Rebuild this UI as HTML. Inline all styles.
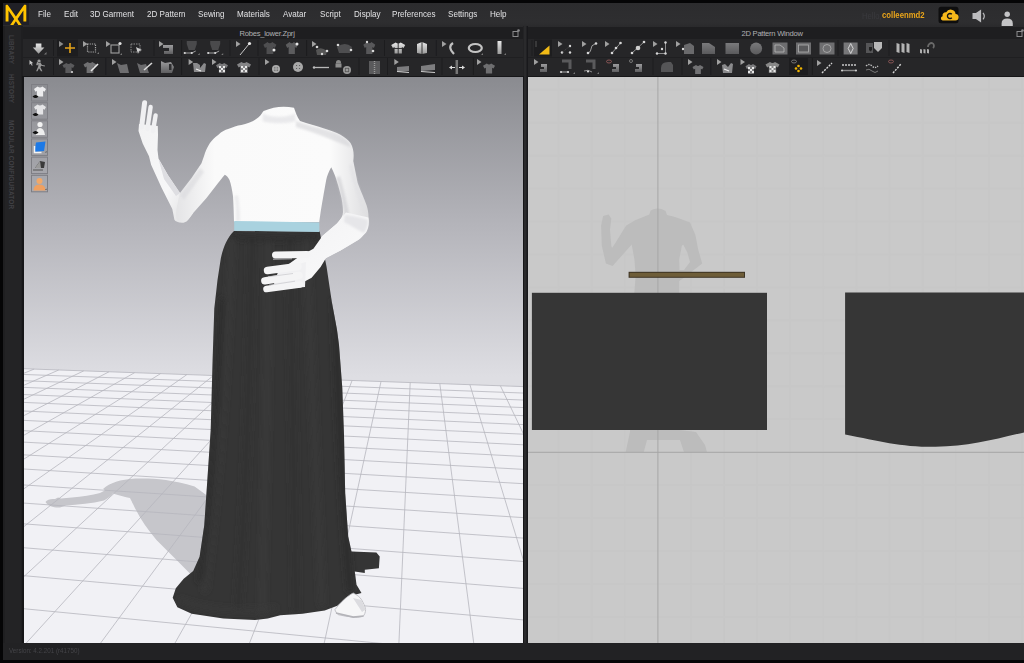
<!DOCTYPE html>
<html><head><meta charset="utf-8">
<style>
*{margin:0;padding:0;box-sizing:border-box}
html,body{width:1024px;height:663px;overflow:hidden;background:#050506;font-family:"Liberation Sans",sans-serif}
.a{position:absolute}
#menubar{left:3px;top:3px;width:1021px;height:24px;background:linear-gradient(#2c2c2e,#2e2e30 80%,#2a2a2c)}
.mi{position:absolute;top:4.8px;font-size:9.5px;color:#e2e2e4;white-space:nowrap;transform:scaleX(0.85);transform-origin:0 0}
#sidebar{left:3px;top:26px;width:20px;height:617px;background:#1f1f21}
#sidebar .strip{position:absolute;left:2px;top:0;width:16px;height:617px;background:#232325}
.vt{position:absolute;font-size:7.4px;color:#404044;white-space:nowrap;transform-origin:0 0;transform:rotate(90deg) scaleX(0.87);letter-spacing:0.15px;font-weight:bold}
#title1{left:23px;top:27px;width:500px;height:12px;background:#1e1e20}
#title2{left:528px;top:27px;width:496px;height:12px;background:#1e1e20}
.tt{position:absolute;top:1.5px;font-size:7.6px;color:#b0b0b2;white-space:nowrap;letter-spacing:-0.25px}
#tb1{left:23px;top:39px;width:500px;height:37px;background:linear-gradient(#262628 0,#262628 48%,#1f1f21 48%,#1f1f21 51%,#262628 51%)}
#tb2{left:528px;top:39px;width:496px;height:37px;background:linear-gradient(#262628 0,#262628 48%,#1f1f21 48%,#1f1f21 51%,#262628 51%)}
#divider{left:523px;top:26px;width:5px;height:617px;background:linear-gradient(90deg,#1c1c1e 0,#2a2a2c 20%,#2a2a2c 60%,#18181b 80%)}
#vp3d{left:24px;top:77px;width:499px;height:566px;overflow:hidden;background:linear-gradient(#8a8b90 0%,#b4b4ba 26%,#dedee3 53%,#e0e0e4 100%)}
#vp2d{left:528px;top:77px;width:496px;height:566px;overflow:hidden;background:#c9c9c9}
#status{left:3px;top:643px;width:1021px;height:17px;background:#222224}
</style></head><body>
<div id="menubar" class="a">
  <div class="a" style="left:0;top:0;width:26px;height:21.5px;background:#202026"></div><svg class="a" style="left:-3px;top:-3px" width="40" height="30" viewBox="0 0 40 30"><path d="M5.6 21.6 V5.6 Q5.6 4.8 6.6 4.8 H7.6 L15.9 16.6 L24.2 4.8 H25.3 Q26.3 4.8 26.3 5.6 V21.6 H23.4 V10.5 L17.6 19 L21.6 25 H18.4 L15.9 21.3 L13.4 25 H10.2 L14.2 19 L8.5 10.5 V21.6 Z" fill="#ffc400"/></svg>
  <span class="mi" style="left:35.3px">File</span>
  <span class="mi" style="left:61.3px">Edit</span>
  <span class="mi" style="left:87.0px">3D Garment</span>
  <span class="mi" style="left:143.5px">2D Pattern</span>
  <span class="mi" style="left:194.5px">Sewing</span>
  <span class="mi" style="left:233.8px">Materials</span>
  <span class="mi" style="left:280.1px">Avatar</span>
  <span class="mi" style="left:316.7px">Script</span>
  <span class="mi" style="left:350.5px">Display</span>
  <span class="mi" style="left:389.1px">Preferences</span>
  <span class="mi" style="left:445.1px">Settings</span>
  <span class="mi" style="left:487.2px">Help</span>
<span class="a" style="left:859px;top:8px;font-size:8.5px;color:#3a3a3e;transform:scaleX(0.9);transform-origin:0 0">Hello,</span>
<span class="a" style="left:879px;top:7px;font-size:9px;font-weight:bold;color:#eaa51a;transform:scaleX(0.86);transform-origin:0 0;white-space:nowrap">colleenmd2</span>
<svg class="a" style="left:0;top:0" width="1024" height="26" viewBox="0 0 1024 26">
<rect x="935.5" y="3.8" width="20" height="16.5" rx="2.5" fill="#0e0e0f"/>
<path d="M939.5 17.5 h12.5 a3.3 3.3 0 0 0 0.6 -6.6 a5 5 0 0 0 -9.4 -1.6 a3.2 3.2 0 0 0 -3.6 3.9 a2.2 2.2 0 0 0 0 4.3z" fill="#f7b81a"/><path d="M948.8 11.3 a2.5 2.5 0 1 0 0 3.4" fill="none" stroke="#141414" stroke-width="1.4"/><path d="M969.5 10 h3.4 l5.2 -3.6 v13.2 l-5.2 -3.6 h-3.4z" fill="#bcbcbe"/>
<path d="M980 9.8 q2.6 3.2 0 6.6" fill="none" stroke="#bcbcbe" stroke-width="1.2"/>
<circle cx="1004.2" cy="11.2" r="2.7" fill="#c4c4c6"/>
<path d="M998.6 23 v-2.5 q0 -5 5.6 -5 q5.6 0 5.6 5 v2.5z" fill="#c4c4c6"/>
</svg>

</div>
<div id="sidebar" class="a"><div class="strip"></div>
  <span class="vt" style="left:13px;top:8.5px">LIBRARY</span>
  <span class="vt" style="left:13px;top:47.5px">HISTORY</span>
  <span class="vt" style="left:13px;top:93.5px">MODULAR CONFIGURATOR</span>
</div>
<div id="title1" class="a"><span class="tt" style="left:216.5px">Robes_lower.Zprj</span><svg class="a" style="left:488px;top:1px" width="10" height="10" viewBox="0 0 10 10"><rect x="2" y="3.5" width="5" height="5" fill="none" stroke="#8a8a8c" stroke-width="1"/><circle cx="7.5" cy="2.5" r="1.3" fill="#8a8a8c"/></svg></div>
<div id="title2" class="a"><span class="tt" style="left:213.5px">2D Pattern Window</span><svg class="a" style="left:487px;top:1px" width="10" height="10" viewBox="0 0 10 10"><rect x="2" y="3.5" width="5" height="5" fill="none" stroke="#8a8a8c" stroke-width="1"/><circle cx="7.5" cy="2.5" r="1.3" fill="#8a8a8c"/></svg></div>
<div id="divider" class="a"></div>
<div id="tb1" class="a"></div>
<div id="tb2" class="a"></div>
<!--TB--><svg class="a" style="left:0;top:0" width="1024" height="80" viewBox="0 0 1024 80"><defs><linearGradient id="gwhite" x1="0" y1="0" x2="0" y2="1"><stop offset="0" stop-color="#e8e8e8"/><stop offset="1" stop-color="#9a9a9a"/></linearGradient>
<linearGradient id="gshirt" x1="0" y1="0" x2="0" y2="1"><stop offset="0" stop-color="#9c9c9e"/><stop offset="1" stop-color="#5e5e60"/></linearGradient>
<linearGradient id="gflat" x1="0" y1="0" x2="0" y2="1"><stop offset="0" stop-color="#7a7a7c"/><stop offset="1" stop-color="#5a5a5c"/></linearGradient></defs><path d="M35.8 43.5h5.6v4h3l-5.8 6.3l-5.8 -6.3h3z" fill="url(#gwhite)"/><path d="M44 54.5l2.5 -2.5v2.5z" fill="#777"/><path d="M53.5 40V56" stroke="#1c1c1e" stroke-width="1"/><rect x="57" y="39.5" width="21" height="17" fill="#1d1d1f"/><path d="M59 41v6l4.5 -3z" fill="#8a8a8a"/><path d="M70 43v10M65 48h10" stroke="#e3a21a" stroke-width="1.6"/><path d="M83 41v6l4.5 -3z" fill="#a0a0a0"/><rect x="87.5" y="44" width="8" height="8" fill="none" stroke="#a8a8a8" stroke-width="1.2" stroke-dasharray="1.2 1"/><path d="M97 54l2 -2v2z" fill="#777"/><path d="M106 41v6l4.5 -3z" fill="#a0a0a0"/><rect x="111" y="45" width="8" height="8" fill="none" stroke="#a0a0a0" stroke-width="1.1"/><circle cx="120" cy="43.5" r="1.6" fill="#e0e0e0"/><path d="M120 55l2 -2v2z" fill="#777"/><rect x="131" y="44" width="9" height="8" fill="none" stroke="#8a8a8a" stroke-width="1" stroke-dasharray="1.5 1"/><path d="M136 47l6 3l-3 1l-1 3z" fill="#d0d0d0"/><path d="M154 40V56" stroke="#1c1c1e" stroke-width="1"/><path d="M159 41v6l4.5 -3z" fill="#a0a0a0"/><path d="M163 45h10v9h-9v-3h5v-3h-6z" fill="url(#gshirt)"/><path d="M181.6 40V56" stroke="#1c1c1e" stroke-width="1"/><path d="M186.75 41h10v3l-2 6h-6l-2 -6z" fill="#4a4a4c"/><path d="M184.75 53h7l4 -2" stroke="#bbb" stroke-width="0.8" fill="none"/><circle cx="184.75" cy="53" r="1.1" fill="#d8d8d8"/><circle cx="191.75" cy="53" r="1.1" fill="#d8d8d8"/><path d="M197.75 55l2 -2v2z" fill="#777"/><path d="M210.2 41h10v3l-2 6h-6l-2 -6z" fill="#4a4a4c"/><path d="M208.2 53h7l4 -2" stroke="#bbb" stroke-width="0.8" fill="none"/><circle cx="208.2" cy="53" r="1.1" fill="#d8d8d8"/><circle cx="215.2" cy="53" r="1.1" fill="#d8d8d8"/><path d="M221.2 55l2 -2v2z" fill="#777"/><path d="M230 40V56" stroke="#1c1c1e" stroke-width="1"/><path d="M236 41v6l4.5 -3z" fill="#a0a0a0"/><path d="M240 55l9 -11" stroke="#c8c8c8" stroke-width="1"/><circle cx="249.5" cy="43.5" r="1.6" fill="#e8e8e8"/><path d="M258 40V56" stroke="#1c1c1e" stroke-width="1"/><path d="M267.56 42.0 L263.4 44.64 L264.96 48.0 L266.52 47.04 L266.52 54.0 L273.28 54.0 L273.28 47.04 L274.84 48.0 L276.4 44.64 L272.23999999999995 42.0 Q269.9 44.4 267.56 42.0Z" fill="#4e4e50"/><circle cx="274" cy="50" r="1.5" fill="#e8e8e8"/><path d="M289.59 42.0 L285.75 44.64 L287.19 48.0 L288.63 47.04 L288.63 54.0 L294.87 54.0 L294.87 47.04 L296.31 48.0 L297.75 44.64 L293.91 42.0 Q291.75 44.4 289.59 42.0Z" fill="#5c5c5e"/><circle cx="297" cy="44" r="1.5" fill="#e8e8e8"/><path d="M306.6 40V56" stroke="#1c1c1e" stroke-width="1"/><path d="M312 41v6l4.5 -3z" fill="#a0a0a0"/><path d="M316 50q5 -4 11 1l-1 4h-9z" fill="#555"/><circle cx="317" cy="47" r="1.3" fill="#d8d8d8"/><circle cx="327" cy="51" r="1.3" fill="#d8d8d8"/><circle cx="322" cy="54" r="1.2" fill="#d8d8d8"/><path d="M337 47q8 -6 15 0l-2 6h-11z" fill="#4e4e50"/><circle cx="338" cy="45" r="1.3" fill="#d8d8d8"/><circle cx="351" cy="50" r="1.3" fill="#d8d8d8"/><path d="M367.14 42.0 L363.3 44.64 L364.74 48.0 L366.18 47.04 L366.18 54.0 L372.42 54.0 L372.42 47.04 L373.86 48.0 L375.3 44.64 L371.46000000000004 42.0 Q369.3 44.4 367.14 42.0Z" fill="#58585a"/><circle cx="373" cy="51" r="1.3" fill="#d8d8d8"/><circle cx="367" cy="42" r="1.2" fill="#d8d8d8"/><path d="M384.5 40V56" stroke="#1c1c1e" stroke-width="1"/><path d="M395.68 42.5 L391.2 44.92 L392.88 48.0 L394.56 47.12 L394.56 53.5 L401.84 53.5 L401.84 47.12 L403.52 48.0 L405.2 44.92 L400.71999999999997 42.5 Q398.2 44.7 395.68 42.5Z" fill="url(#gwhite)"/><path d="M398.2 43v11M392 48.5h12" stroke="#2a2a2c" stroke-width="0.9"/><path d="M417 44l5 -2l5 2v9l-5 1l-5 -1z" fill="url(#gwhite)"/><path d="M422 42v12" stroke="#333" stroke-width="1"/><path d="M436.3 40V56" stroke="#1c1c1e" stroke-width="1"/><path d="M442 41v6l4.5 -3z" fill="#a0a0a0"/><path d="M453 43q-6 4 1 11" stroke="#c0c0c0" stroke-width="2.2" fill="none"/><ellipse cx="475.3" cy="48" rx="6.5" ry="4" fill="none" stroke="#c4c4c4" stroke-width="2.2"/><path d="M481 55l2 -2v2z" fill="#777"/><rect x="497.5" y="41" width="4" height="13" fill="url(#gwhite)"/><path d="M504 55l2 -2v2z" fill="#777"/><path d="M29.5 60l0 4.800000000000001l1.2800000000000002 -1.1199999999999999l1.1199999999999999 2.08l0.7200000000000001 -0.4l-1.04 -2.0l1.7600000000000002 -0.2z" fill="#c8c8c8"/><path d="M39 59.5a1.6 1.6 0 1 0 0.1 0zM37 62l3 0l2 3l3 0.5l-0.3 1l-3.5 -0.8l-0.8 1.5l2 4h-1.4l-2 -3l-1.5 3h-1.4l2 -4.5l0.4 -2.5l-1.4 1.2l-0.9 -0.6z" fill="#9a9a9a"/><path d="M53.5 58V75" stroke="#1c1c1e" stroke-width="1"/><path d="M59 59v6l4.5 -3z" fill="#a0a0a0"/><path d="M66.34 63.0 L62.5 65.2 L63.94 68.0 L65.38 67.2 L65.38 73.0 L71.62 73.0 L71.62 67.2 L73.06 68.0 L74.5 65.2 L70.66 63.0 Q68.5 65.0 66.34 63.0Z" fill="#5a5a5c"/><circle cx="72" cy="72" r="1.1" fill="#d8d8d8"/><path d="M87.66 62.0 L83.5 64.42 L85.06 67.5 L86.62 66.62 L86.62 73.0 L93.38 73.0 L93.38 66.62 L94.94 67.5 L96.5 64.42 L92.34 62.0 Q90.0 64.2 87.66 62.0Z" fill="#707072"/><path d="M91 71l7 -7" stroke="#e8e8e8" stroke-width="1.6"/><path d="M105.8 58V75" stroke="#1c1c1e" stroke-width="1"/><path d="M112 59v6l4.5 -3z" fill="#a0a0a0"/><path d="M117 63l4 2l6 -1l2 9h-9z" fill="#6e6e70"/><path d="M137 63l4 2l5 -1l3 9h-9z" fill="#6a6a6c"/><path d="M144 70l8 -7" stroke="#d8d8d8" stroke-width="1.6"/><path d="M161 61l4 2l6 -1l3 5l-2 6h-11z" fill="url(#gshirt)"/><rect x="169" y="64" width="2.5" height="6" fill="#2e2e30"/><path d="M181.6 58V75" stroke="#1c1c1e" stroke-width="1"/><path d="M188.6 59v6l4.5 -3z" fill="#a0a0a0"/><path d="M193 63h4l3 2v3l4 -5l2 1l-1 8h-11z" fill="#8a8a8c"/><path d="M196 69l5 2" stroke="#eee" stroke-width="1.2"/><path d="M212 59v6l4.5 -3z" fill="#a0a0a0"/><path d="M219.84 63.0 L216.0 65.2 L217.44 68.0 L218.88 67.2 L218.88 73.0 L225.12 73.0 L225.12 67.2 L226.56 68.0 L228.0 65.2 L224.16 63.0 Q222.0 65.0 219.84 63.0Z" fill="#7a7a7c"/><rect x="219" y="66" width="2" height="2" fill="#e8e8e8"/><rect x="219" y="70" width="2" height="2" fill="#e8e8e8"/><rect x="221" y="68" width="2" height="2" fill="#e8e8e8"/><rect x="223" y="66" width="2" height="2" fill="#e8e8e8"/><rect x="223" y="70" width="2" height="2" fill="#e8e8e8"/><path d="M241.48 62.0 L237.0 64.42 L238.68 67.5 L240.36 66.62 L240.36 73.0 L247.64 73.0 L247.64 66.62 L249.32 67.5 L251.0 64.42 L246.52 62.0 Q244.0 64.2 241.48 62.0Z" fill="#858587"/><rect x="241" y="66" width="2" height="2" fill="#e8e8e8"/><rect x="241" y="70" width="2" height="2" fill="#e8e8e8"/><rect x="243" y="68" width="2" height="2" fill="#e8e8e8"/><rect x="245" y="66" width="2" height="2" fill="#e8e8e8"/><rect x="245" y="70" width="2" height="2" fill="#e8e8e8"/><path d="M259 58V75" stroke="#1c1c1e" stroke-width="1"/><path d="M265 59v6l4.5 -3z" fill="#a0a0a0"/><circle cx="276" cy="69" r="4" fill="#aaaaaa"/><path d="M274.8 67.8h.1M277.2 67.8h.1M274.8 70.2h.1M277.2 70.2h.1" stroke="#555" stroke-width="1.2" stroke-linecap="round"/><circle cx="298" cy="67" r="5" fill="#a8a8a8"/><path d="M296.5 65.5h.1M299.5 65.5h.1M296.5 68.5h.1M299.5 68.5h.1" stroke="#555" stroke-width="1.2" stroke-linecap="round"/><path d="M314 67.5h15" stroke="#b8b8b8" stroke-width="1.3"/><circle cx="314" cy="67.5" r="1.2" fill="#bbb"/><path d="M336 62.5a2.5 2.5 0 0 1 5 0v1h-5z" fill="#8a8a8a"/><rect x="335.5" y="63.5" width="6" height="4" fill="#8e8e8e"/><circle cx="347" cy="70" r="4" fill="#9a9a9a"/><rect x="345.3" y="68.3" width="3.4" height="3.4" fill="none" stroke="#555" stroke-width="0.8"/><path d="M359 58V75" stroke="#1c1c1e" stroke-width="1"/><rect x="369" y="61" width="11" height="13" fill="#5a5a5c"/><path d="M374.5 61v13" stroke="#9a9a9a" stroke-width="1.4" stroke-dasharray="1 1"/><path d="M387.5 58V75" stroke="#1c1c1e" stroke-width="1"/><path d="M394.3 59v6l4.5 -3z" fill="#a0a0a0"/><path d="M397 67l12 -1v5l-12 1z" fill="#7c7c7e"/><path d="M397 71.5l12 1" stroke="#d0d0d0" stroke-width="1.2"/><path d="M421 66l14 -2v6l-14 1z" fill="#7e7e80"/><path d="M421 71.5l14 1" stroke="#d0d0d0" stroke-width="1.2"/><path d="M442 58V75" stroke="#1c1c1e" stroke-width="1"/><path d="M456.8 60v14" stroke="#777" stroke-width="2.5"/><path d="M449 67.5l3 -2v4zM465 67.5l-3 -2v4z" fill="#ddd"/><path d="M452 67.5h3M459 67.5h3" stroke="#ddd" stroke-width="1"/><path d="M473.4 58V75" stroke="#1c1c1e" stroke-width="1"/><path d="M477 59v6l4.5 -3z" fill="#a0a0a0"/><path d="M486.84 63.5 L483.0 65.7 L484.44 68.5 L485.88 67.7 L485.88 73.5 L492.12 73.5 L492.12 67.7 L493.56 68.5 L495.0 65.7 L491.16 63.5 Q489.0 65.5 486.84 63.5Z" fill="#6e6e70"/><path d="M532 40V56" stroke="#1c1c1e" stroke-width="1"/><rect x="534" y="39.5" width="18" height="17" fill="#1d1d1f"/><path d="M539 54.5l10.5 -9v9z" fill="#f2bb16"/><path d="M536 41v6" stroke="#555" stroke-width="1"/><path d="M558 41v6l4.5 -3z" fill="#a0a0a0"/><circle cx="562" cy="52.5" r="1.2" fill="#d8d8d8"/><circle cx="570" cy="52.5" r="1.2" fill="#d8d8d8"/><circle cx="570" cy="46" r="1.2" fill="#d8d8d8"/><path d="M562 52.5l8 -6.5" stroke="#666" stroke-width="0.6" stroke-dasharray="1 1"/><path d="M582 41v6l4.5 -3z" fill="#a0a0a0"/><path d="M588 53q3 -1 3 -4q0 -4 4 -5" stroke="#bbb" stroke-width="0.8" fill="none"/><circle cx="588" cy="53" r="1.3" fill="#d8d8d8"/><circle cx="596" cy="43.5" r="1.3" fill="#d8d8d8"/><path d="M605 41v6l4.5 -3z" fill="#a0a0a0"/><path d="M612 53l8.5 -10" stroke="#aaa" stroke-width="0.8"/><circle cx="612" cy="53" r="1.3" fill="#d8d8d8"/><circle cx="616" cy="48" r="1.3" fill="#d8d8d8"/><circle cx="620.5" cy="43" r="1.3" fill="#d8d8d8"/><path d="M632 53l12 -11" stroke="#aaa" stroke-width="0.8"/><circle cx="632" cy="53" r="1.3" fill="#d8d8d8"/><circle cx="644" cy="42" r="1.3" fill="#d8d8d8"/><circle cx="638" cy="48" r="2.3" fill="#cfcfcf"/><path d="M653 41v6l4.5 -3z" fill="#a0a0a0"/><path d="M657 53.5h8.5v-11" stroke="#aaa" stroke-width="0.8" fill="none"/><circle cx="657" cy="53.5" r="1.2" fill="#d8d8d8"/><circle cx="665.5" cy="53.5" r="1.2" fill="#d8d8d8"/><circle cx="662" cy="49" r="1.2" fill="#d8d8d8"/><circle cx="665.5" cy="42.5" r="1.2" fill="#d8d8d8"/><path d="M676 41v6l4.5 -3z" fill="#a0a0a0"/><path d="M684 45l6 -2l4 3v8h-10z" fill="#6a6a6c"/><circle cx="683" cy="49" r="1.2" fill="#d8d8d8"/><path d="M702 43h7l6 4v7h-13z" fill="url(#gflat)"/><rect x="725.5" y="43" width="13.5" height="11" fill="url(#gflat)"/><circle cx="756.1" cy="48.5" r="6" fill="url(#gflat)"/><rect x="772.5" y="42.5" width="15" height="12" fill="#6e6e70"/><path d="M775 45h5l4 3v4h-9z" fill="none" stroke="#b8b8b8" stroke-width="0.8"/><rect x="796" y="42.5" width="15" height="12" fill="#6e6e70"/><rect x="798.5" y="45" width="10" height="7" fill="#59595b" stroke="#b0b0b0" stroke-width="0.8"/><rect x="819.5" y="42.5" width="15" height="12" fill="#6e6e70"/><circle cx="827" cy="48.5" r="4" fill="none" stroke="#b0b0b0" stroke-width="0.8"/><path d="M838 40V56" stroke="#1c1c1e" stroke-width="1"/><rect x="843.6" y="42.5" width="14" height="12" fill="#777779"/><path d="M850.7 43.5l2.5 5l-2.5 5l-2.5 -5z" fill="none" stroke="#e0e0e0" stroke-width="0.9"/><path d="M866 43h7v10h-7z" fill="#555557"/><path d="M874 42h8v6l-4 4l-4 -4z" fill="#b8b8b8"/><path d="M869 47h3v3l-1.5 1.5l-1.5 -1.5z" fill="#222"/><path d="M889 40V56" stroke="#1c1c1e" stroke-width="1"/><path d="M896.5 43l3 1v9l-3 -1zM901.5 43l3 1v9l-3 -1zM906.5 43l3 1v9l-3 -1z" fill="#b4b4b4"/><path d="M920 49l2 .5v4l-2 -.5zM923.5 49l2 .5v4l-2 -.5zM927 49l2 .5v4l-2 -.5z" fill="#b0b0b0"/><path d="M928 47a4 4 0 0 1 4 -4a3 3 0 0 1 1 5" stroke="#6a6a6a" stroke-width="1.8" fill="none"/><path d="M534 59v6l4.5 -3z" fill="#a0a0a0"/><path d="M541 64h6v8h-7v-3h4v-2h-3z" fill="url(#gshirt)"/><path d="M562 61h8v8" stroke="#5a5a5c" stroke-width="3" fill="none"/><path d="M561 72h8" stroke="#ccc" stroke-width="0.8"/><circle cx="561" cy="72" r="1.1" fill="#d8d8d8"/><circle cx="568" cy="72" r="1.1" fill="#d8d8d8"/><path d="M573 74l2 -2v2z" fill="#777"/><path d="M586 61h8v8" stroke="#5a5a5c" stroke-width="3" fill="none"/><path d="M584 71q4 -2 8 1" stroke="#aaa" stroke-width="0.8" fill="none"/><circle cx="588" cy="71.5" r="1.1" fill="#d8d8d8"/><path d="M597 74l2 -2v2z" fill="#777"/><ellipse cx="609" cy="61.5" rx="2.5" ry="1.5" fill="none" stroke="#a06060" stroke-width="0.8"/><path d="M613 64h6v8h-7v-3h4v-2h-3z" fill="url(#gshirt)"/><circle cx="631" cy="61" r="1.5" fill="none" stroke="#888" stroke-width="0.8"/><path d="M636 64h6v8h-7v-3h4v-2h-3z" fill="url(#gshirt)"/><path d="M653 58V75" stroke="#1c1c1e" stroke-width="1"/><path d="M661 72v-4q0 -6 7 -6h3l2 3v7z" fill="#555557"/><path d="M682 58V75" stroke="#1c1c1e" stroke-width="1"/><path d="M688 59v6l4.5 -3z" fill="#a0a0a0"/><path d="M696.02 65.0 L692.5 66.98 L693.82 69.5 L695.14 68.78 L695.14 74.0 L700.86 74.0 L700.86 68.78 L702.18 69.5 L703.5 66.98 L699.98 65.0 Q698.0 66.8 696.02 65.0Z" fill="#727274"/><path d="M710.8 58V75" stroke="#1c1c1e" stroke-width="1"/><path d="M717 59v6l4.5 -3z" fill="#a0a0a0"/><path d="M722 65l3 -1l3 3l3 -4l2 1l-1 9h-9z" fill="#8a8a8c"/><path d="M724 69l5 2" stroke="#eee" stroke-width="1.2"/><path d="M740.5 59v6l4.5 -3z" fill="#a0a0a0"/><path d="M749.02 64.0 L745.5 66.2 L746.82 69.0 L748.14 68.2 L748.14 74.0 L753.86 74.0 L753.86 68.2 L755.18 69.0 L756.5 66.2 L752.98 64.0 Q751.0 66.0 749.02 64.0Z" fill="#7c7c7e"/><rect x="748" y="67" width="2" height="2" fill="#e8e8e8"/><rect x="748" y="71" width="2" height="2" fill="#e8e8e8"/><rect x="750" y="69" width="2" height="2" fill="#e8e8e8"/><rect x="752" y="67" width="2" height="2" fill="#e8e8e8"/><rect x="752" y="71" width="2" height="2" fill="#e8e8e8"/><path d="M769.98 62.0 L765.5 64.42 L767.18 67.5 L768.86 66.62 L768.86 73.0 L776.14 73.0 L776.14 66.62 L777.82 67.5 L779.5 64.42 L775.02 62.0 Q772.5 64.2 769.98 62.0Z" fill="#888"/><rect x="769.5" y="66" width="2" height="2" fill="#e8e8e8"/><rect x="769.5" y="70" width="2" height="2" fill="#e8e8e8"/><rect x="771.5" y="68" width="2" height="2" fill="#e8e8e8"/><rect x="773.5" y="66" width="2" height="2" fill="#e8e8e8"/><rect x="773.5" y="70" width="2" height="2" fill="#e8e8e8"/><rect x="789" y="58" width="19" height="17" fill="#1d1d1f"/><ellipse cx="794" cy="61.5" rx="2.5" ry="1.5" fill="none" stroke="#888" stroke-width="0.8"/><path d="M798.5 64.5l2.5 2.5l-2.5 2.5l-2.5 -2.5zM798.5 68l2.5 2.5l-2.5 2.5l-2.5 -2.5z" fill="none"/><circle cx="798.5" cy="66" r="1.3" fill="#f0b400"/><circle cx="796" cy="68.5" r="1.3" fill="#f0b400"/><circle cx="801" cy="68.5" r="1.3" fill="#f0b400"/><circle cx="798.5" cy="71" r="1.3" fill="#f0b400"/><path d="M812.4 58V75" stroke="#1c1c1e" stroke-width="1"/><path d="M817 60v6l4.5 -3z" fill="#a0a0a0"/><path d="M822 73l10 -10" stroke="#d8d8d8" stroke-width="1.4" stroke-dasharray="2 1.2"/><path d="M842 65h14" stroke="#c8c8c8" stroke-width="1.6" stroke-dasharray="2 1"/><path d="M842 70.5h14" stroke="#8a8a8a" stroke-width="1.4"/><circle cx="842" cy="70.5" r="1" fill="#d8d8d8"/><circle cx="856" cy="70.5" r="1" fill="#d8d8d8"/><path d="M866 66q3 -3 6 0t6 0" stroke="#c0c0c0" stroke-width="1.3" fill="none" stroke-dasharray="1.5 1"/><path d="M866 70q3 -2 6 1t6 0" stroke="#777" stroke-width="1" fill="none"/><ellipse cx="891" cy="61.5" rx="2.5" ry="1.5" fill="none" stroke="#a06060" stroke-width="0.8"/><path d="M893 73l8 -9" stroke="#d8d8d8" stroke-width="1.4" stroke-dasharray="2 1.2"/></svg><!--/TB-->
<div class="a" style="left:22px;top:76px;width:502px;height:567px;background:#161618"></div><div class="a" style="left:527px;top:76px;width:497px;height:1px;background:#161618"></div><div id="vp3d" class="a"><svg class="a" style="left:-24px;top:-77px" width="1024" height="663" viewBox="0 0 1024 663"><defs>
<linearGradient id="skirtg" x1="0" x2="1" y1="0" y2="0">
<stop offset="0" stop-color="#2e2e2e"/><stop offset="0.15" stop-color="#3a3a3a"/><stop offset="0.3" stop-color="#333"/><stop offset="0.45" stop-color="#3c3c3c"/><stop offset="0.6" stop-color="#343434"/><stop offset="0.75" stop-color="#3b3b3b"/><stop offset="0.9" stop-color="#303030"/><stop offset="1" stop-color="#262626"/>
</linearGradient>
<linearGradient id="bodyg" x1="0" x2="1" y1="0" y2="0">
<stop offset="0" stop-color="#e4e4e6"/><stop offset="0.2" stop-color="#fafafa"/><stop offset="0.8" stop-color="#fbfbfb"/><stop offset="1" stop-color="#dedee0"/>
</linearGradient>
<linearGradient id="armg" x1="0" x2="1" y1="0" y2="1">
<stop offset="0" stop-color="#f2f2f3"/><stop offset="0.6" stop-color="#f7f7f8"/><stop offset="1" stop-color="#dcdcde"/>
</linearGradient>
<filter id="blur1"><feGaussianBlur stdDeviation="1.2"/></filter>
<filter id="blur3" x="-20%" y="-20%" width="140%" height="140%"><feGaussianBlur stdDeviation="3"/></filter><filter id="blur05"><feGaussianBlur stdDeviation="0.5"/></filter>
</defs>
<polygon points="-38.2,366.5 626.6,390.3 1618.1,1230.9 -1123.6,732.3" fill="#f1f1f5"/>
<!-- shadow -->
<g filter="url(#blur05)" fill="#c6c6cb"><path d="M103 489 C110 483 120 479.5 135.5 478.6 C150 478 170 479 194.6 486.4 L209 497 L206 560 L197 583 L190.4 574 L177.8 561.3 L156.7 540.2 C148 530 141 520 136 510 C133 504 131.5 501 130 498 C120 496 110 493 103 489 Z"/>
<path d="M45.5 502 C47 499.5 51 498.5 55 499 L58 497.5 L61 498.5 L72 497.5 C82 496.5 92 495.5 100 493 C105 491 108 488 111 484 L117 486 C115 492 111 497 104 500.5 C92 503.5 78 504.5 66 505.5 L60 507.5 C54 508 48 506 45.5 502 Z"/></g>
<path d="M-38.2 366.5L626.6 390.3M-53.2 371.6L634.8 397.2M-69.3 377.1L643.6 404.7M-86.6 382.9L653.2 412.8M-105.1 389.1L663.6 421.6M-125.0 395.8L675.0 431.3M-146.5 403.1L687.4 441.8M-169.8 410.9L701.2 453.5M-195.0 419.4L716.4 466.4M-222.6 428.7L733.3 480.8M-252.7 438.9L752.3 496.9M-285.9 450.0L773.7 515.0M-322.4 462.3L798.1 535.6M-363.0 476.0L826.0 559.3M-408.3 491.3L858.3 586.7M-459.2 508.4L896.1 618.8M-516.7 527.8L941.1 656.9M-582.3 549.9L995.4 703.0M-657.9 575.4L1062.3 759.7M-745.8 605.0L1146.7 831.2M-849.3 639.9L1256.5 924.3M-973.1 681.6L1405.2 1050.5M-1123.6 732.3L1618.1 1230.9M-38.2 366.5L-1123.6 732.3M-14.4 367.4L-1065.0 743.0M9.7 368.3L-1003.9 754.1M34.1 369.1L-940.0 765.7M58.7 370.0L-873.3 777.9M83.7 370.9L-803.4 790.6M109.0 371.8L-730.3 803.9M134.6 372.7L-653.6 817.8M160.6 373.6L-573.1 832.4M186.9 374.6L-488.5 847.8M213.5 375.5L-399.5 864.0M240.5 376.5L-305.7 881.1M267.9 377.5L-206.7 899.1M295.6 378.5L-102.1 918.1M323.6 379.5L8.6 938.2M352.1 380.5L125.9 959.6M381.0 381.5L250.6 982.2M410.2 382.6L383.2 1006.4M439.8 383.6L524.6 1032.1M469.9 384.7L675.7 1059.6M500.4 385.8L837.5 1089.0M531.3 386.9L1011.1 1120.6M562.6 388.0L1198.0 1154.5M594.4 389.2L1399.7 1191.2M626.6 390.3L1618.1 1230.9" stroke="#b6b6be" stroke-width="0.8" fill="none"/>
<!-- left forearm + hand -->
<path fill="url(#armg)" d="M139 124 L157.8 126 L158 135 L157.5 150 L158.5 158.4 L168 175.3 L180 193 L193.2 212.9 L188.1 219.7 C186 222 184 223 182 222.8 C178 222.5 175.5 221.5 174.4 219.7 L172.3 209 L161.7 188 L151.1 164.7 L149 156.3 L142.7 143.6 L138.5 130.9 Z"/>
<g stroke="#f0f0f2" stroke-linecap="round" fill="none">
<path d="M141.6 127 L144.6 102.8" stroke-width="5"/>
<path d="M147.4 129 L150.6 107" stroke-width="4.4"/>
<path d="M153 131 L155.6 115.5" stroke-width="4.4"/>
</g>
<path d="M158.5 159 L168 175.3 L180 193 L176 196 L164 179 Z" fill="#dedee2" filter="url(#blur05)"/>
<!-- torso + upper arms -->
<path fill="url(#bodyg)" d="M261.8 113.5 C262.3 112.5 262.8 111.8 263.6 111 Q278.7 104.5 294 107.8 C295.5 112 297 117 300 121 C308 124 316 125.8 324 128.5 C337 132 346 137 350.5 143 C354 149 354 155 353.3 161 L357.5 182.5 C361 192 364.5 199 366.5 205 C368.5 211 369 217 368 223 C367.5 228 367 231 366 232 L358.6 239.8 L340.5 250.6 L326 257.9 L315 266 L313.4 248.8 L322.4 236.1 L337 223.5 C341 219 343 216 343 212 C343 205 342 200 340.5 194 C338 184 335 174 331.2 167.2 C328.5 172 327 176 326.2 180 C324 192 322 204 320.5 213 L319.2 222 L234 222 C233.8 212 233.5 204 233 196.3 C232 189 231 184 229.5 180 C228 177 226.5 175.5 224.8 174.8 C222 178 220 181 218.1 183.1 L206.5 198 L193.2 212.9 C191 216 189 219 186.6 221.2 C183 222.8 179.5 222.5 177 220 C175.5 216 176 210 177.5 204 C178.5 199 179 196 180 193 L191.6 178.1 L201.5 163.2 C203 159 204 156 204.9 153.2 C206.5 149 208 146 209.8 143.2 C212 140 215 137 218.1 134.9 C222 131.5 225 130 228.1 129.1 C233 127 237 125.5 241.4 125 C249 123 257 120.5 261.8 113.5 Z"/>
<g filter="url(#blur1)" opacity="0.55">
<path d="M296 121 C310 126 322 128 336 133 C344 137 349 141 351 147 C346 146 338 142 330 139 C318 134 306 130 296 127 Z" fill="#d0d0d4"/>
<path d="M263 113 C268 118 290 118 295 113 L295.5 121 C290 124 268 124 262.5 121 Z" fill="#dcdce0"/>
<path d="M340 176 C344 190 348 205 350 220 L345 222 C343 205 340 190 336 178 Z" fill="#c8c8cc"/>
<path d="M352 163 C356 180 362 196 366 212 L363 214 C358 198 352 182 349 166 Z" fill="#e0e0e3"/>
<path d="M180 195 L200 168 L204 172 L184 200 Z" fill="#d8d8dc"/>
<path d="M238 195 C240 205 240 215 240 221 L236 221 C236 212 236 204 234 196 Z" fill="#e2e2e5"/>
</g>
<!-- skirt -->
<clipPath id="skc"><path d="M234 231 L319.7 231.5 L321.4 241 L326.6 267 L331.8 301.7 L337 330 L339 345 L342.3 388 L344 435 L345.2 493.3 L348.2 536.6 L351.5 551.6 L376.4 552.4 L379.7 556.5 L378.9 568.2 L364.8 569.8 L364.8 573.1 L354.8 571.5 L356.5 584.8 L361.5 593 L354.8 594.7 L346.5 598 L337.3 605.7 L324.7 610.5 L302.5 613.7 L280.3 615.2 L267.7 618.4 L255 620 L223.3 618.4 L191.7 613.7 L177.4 607.3 L172.7 597.8 L175.8 588.3 L183.7 578.8 L193.2 570.9 L199.6 556.7 L204.3 525 L207.5 477.5 L210.7 430 L212.5 362.9 L214.3 308.6 L217.5 280 L220.8 258.4 C223 248 227 238 234 231 Z"/></clipPath>
<path fill="#353535" d="M234 231 L319.7 231.5 L321.4 241 L326.6 267 L331.8 301.7 L337 330 L339 345 L342.3 388 L344 435 L345.2 493.3 L348.2 536.6 L351.5 551.6 L376.4 552.4 L379.7 556.5 L378.9 568.2 L364.8 569.8 L364.8 573.1 L354.8 571.5 L356.5 584.8 L361.5 593 L354.8 594.7 L346.5 598 L337.3 605.7 L324.7 610.5 L302.5 613.7 L280.3 615.2 L267.7 618.4 L255 620 L223.3 618.4 L191.7 613.7 L177.4 607.3 L172.7 597.8 L175.8 588.3 L183.7 578.8 L193.2 570.9 L199.6 556.7 L204.3 525 L207.5 477.5 L210.7 430 L212.5 362.9 L214.3 308.6 L217.5 280 L220.8 258.4 C223 248 227 238 234 231 Z"/>
<g clip-path="url(#skc)"><g filter="url(#blur3)" fill="none" stroke-linecap="round">
<path d="M232 240 C228 330 222 450 205 590" stroke="#3b3b3b" stroke-width="4"/>
<path d="M252 240 C250 340 248 460 238 610" stroke="#303030" stroke-width="5"/>
<path d="M268 240 C268 340 266 460 262 615" stroke="#3c3c3c" stroke-width="4"/>
<path d="M290 240 C292 340 294 460 296 612" stroke="#313131" stroke-width="5"/>
<path d="M306 240 C310 340 316 460 322 605" stroke="#3a3a3a" stroke-width="4"/>
<path d="M222 300 C218 400 214 500 200 580" stroke="#2a2a2a" stroke-width="5"/>
<path d="M335 300 C338 400 342 500 350 590" stroke="#2a2a2a" stroke-width="5"/>
<path d="M180 600 C210 612 250 612 275 608" stroke="#3a3a3a" stroke-width="3"/>
<path d="M232 236 C255 240 290 240 318 236" stroke="#2a2a2a" stroke-width="4"/>
</g></g>
<!-- shoe -->
<path fill="#f6f6f7" stroke="#b8b8bd" stroke-width="0.8" d="M334.9 609.7 C340 603 347 596 353.2 593 C357 595 360 597 361.5 599.7 C363.5 603 365 606 365.6 609.7 C365.5 612.5 364.5 614.8 363.1 616.3 C359 617.3 356 617.5 353.2 617.1 C348 616.5 343 616 338.2 614.7 C336.5 613 335.5 611.5 334.9 609.7 Z"/>
<path fill="none" stroke="#b4b4b9" stroke-width="1.6" d="M336 613 L353.2 617.1 L363.6 616" filter="url(#blur05)"/><path fill="#dcdce0" d="M353 598 L361.5 600 L365.6 609.7 L362 612 Z" filter="url(#blur05)"/>
<!-- waistband -->
<path fill="#a9d2df" d="M234.2 221 L319.3 222.4 L319.3 231.9 L234.2 230.8 Z"/>
<!-- right hand over skirt -->
<path fill="url(#armg)" d="M346 212.6 L368.4 217.5 C369.5 223 368.5 229 366 232.5 C363 236 361 238 358.6 239.8 L340.5 250.6 L326 257.9 L320.6 266.9 L311.6 277.8 L300 284 L290 288 L286 266 L300 256 L313.4 248.8 L322.4 236.1 L337 223.5 Z"/>
<path d="M306 262 L290 266.5 L278 272 L272 290 L305 287 Z" fill="#f0f0f2"/>
<g stroke="#f4f4f5" stroke-linecap="round" fill="none">
<path d="M307 254.5 L275.5 255" stroke-width="7"/>
<path d="M298 266.5 L267.5 270.5" stroke-width="7.4"/>
<path d="M299 275.5 L264.8 280.8" stroke-width="7.4"/>
<path d="M300 284.5 L266.5 289" stroke-width="6.6"/>
</g>
<path d="M292 258.8 L273 259.2 M293 273.5 L268 276.8 M295 281.2 L269 285.2" stroke="#cdcdd1" stroke-width="0.8" fill="none"/>
<path d="M345 215 C355 216 362 218 368 220 C368 226 366 230 364 233 C358 230 350 225 344 222 Z" fill="#e6e6e9" filter="url(#blur1)"/>
<rect x="31.5" y="84.5" width="16" height="16.5" fill="none" stroke="#7e7e84" stroke-width="1"/><rect x="31.5" y="102.7" width="16" height="16.5" fill="none" stroke="#7e7e84" stroke-width="1"/><rect x="31.5" y="120.8" width="16" height="16.5" fill="none" stroke="#7e7e84" stroke-width="1"/><rect x="31.5" y="138.9" width="16" height="16.5" fill="none" stroke="#7e7e84" stroke-width="1"/><rect x="31.5" y="157.1" width="16" height="16.5" fill="none" stroke="#7e7e84" stroke-width="1"/><rect x="31.5" y="175.3" width="16" height="16.5" fill="none" stroke="#7e7e84" stroke-width="1"/><path d="M37.6 86.5 L34.0 89.0 L35.44 91.7 L36.88 91.0 L36.88 96.5 L43.120000000000005 96.5 L43.120000000000005 91.0 L44.56 91.7 L46.0 89.0 L42.4 86.5 Q40.0 88.7 37.6 86.5Z" fill="#ececee"/><path d="M32.5 96.5 q3 -3 6 0 q-3 3 -6 0z" fill="#111"/><circle cx="35.5" cy="96.5" r="1" fill="#111"/><path d="M37.6 104.5 L34.0 107.0 L35.44 109.7 L36.88 109.0 L36.88 114.5 L43.120000000000005 114.5 L43.120000000000005 109.0 L44.56 109.7 L46.0 107.0 L42.4 104.5 Q40.0 106.7 37.6 104.5Z" fill="#e4e4e6"/><path d="M32.5 114.5 q3 -3 6 0 q-3 3 -6 0z" fill="#111"/><circle cx="35.5" cy="114.5" r="1" fill="#111"/><circle cx="40" cy="124.5" r="2.6" fill="#f2f2f2"/><path d="M36 135 q0 -7 4 -7 q4 0 5 7z" fill="#eeeeee"/><path d="M32.5 132.5 q3 -3 6 0 q-3 3 -6 0z" fill="#111"/><circle cx="35.5" cy="132.5" r="1" fill="#111"/><path d="M36 142.5 l9.5 -1 l-1.5 9.5 l-9.5 1z" fill="#1d79e6"/><path d="M34.5 146 v6.5 h7" fill="none" stroke="#f4f4f4" stroke-width="1.5"/><path d="M45 152.5 l1.5 -1.5v1.5z" fill="#444"/><path d="M35 168 l5 -7 l5 1 l-1 6 z" fill="#3a3a3a"/><path d="M35 168 l5 -7 l1 7z" fill="#9a9a9a"/><path d="M33 170 h10" stroke="#555" stroke-width="1"/><circle cx="39.5" cy="181" r="3" fill="#f2a868"/><path d="M33.5 190.5 q0 -6 6 -6 q6 0 6 6z" fill="#f0a060"/><path d="M45 190 l1.5 -1.5v1.5z" fill="#444"/></svg></div>
<div id="vp2d" class="a"><svg class="a" style="left:-528px;top:-77px" width="1024" height="663" viewBox="0 0 1024 663"><path d="M558.6 76V643M591.7 76V643M624.8 76V643M691.0 76V643M724.1 76V643M757.2 76V643M790.3 76V643M823.4 76V643M856.5 76V643M889.6 76V643M922.7 76V643M955.8 76V643M988.9 76V643M1022.0 76V643M528 617.1H1024M528 584.2H1024M528 551.2H1024M528 518.2H1024M528 485.3H1024M528 419.3H1024M528 386.4H1024M528 353.4H1024M528 320.4H1024M528 287.5H1024M528 254.5H1024M528 221.5H1024M528 188.5H1024M528 155.6H1024M528 122.6H1024M528 89.6H1024" stroke="#c5c5c5" stroke-width="1.6" fill="none" opacity="0.75"/>
<!-- silhouette -->
<path fill="#bcbcbc" fill-rule="evenodd" d="M650.7 210.4 Q658 206.5 665.6 211.1 L667 215 Q680 218 690 222.6 L695.4 234.9 L698.2 249.8 L702.2 263.4 L695.4 268.8 L683.2 278.3 L679.2 281 L679.2 292 L680 430 L696 432 L705 445 L707 452.3 L684 452.3 L680 440 L647 440 L643.7 452.3 L625.6 452.3 L630 432 L634.4 292 L635.7 275.6 L634.4 259.3 L631.7 244.4 L622.1 255.2 L612.6 266.1 L605.9 263.4 L601.8 245.7 L601.1 225.4 L603.1 215.9 L608.6 214.5 L611.3 218.6 L610 229.4 L611.3 245.7 L612 248 L615.4 243 L622.1 232.1 L626.2 225.4 L635.7 219.9 L649.3 214.5 Z M683.2 244.4 L687.3 252.5 L690 262 L684 270 L679.5 270 L679.2 259.3 L681.9 245.7 Z"/>
<!-- axes -->
<path d="M657.9 76V643M528 452.3H1024" stroke="#a6a6a6" stroke-width="1" fill="none"/>
<!-- pieces -->
<rect x="531.9" y="292.8" width="235.1" height="137.2" fill="#363636"/>
<path fill="#363636" d="M845.1 292.6 H1030 V431 C1000 438 970 446.5 935.6 446.8 C900 447 880 441 845.1 434.4 Z"/>
<!-- belt -->
<rect x="628.6" y="271.8" width="116.4" height="6" fill="#3d3424"/>
<rect x="629.6" y="272.8" width="114.4" height="4" fill="#6e5d38"/>
</svg></div>
<div id="status" class="a"><span class="a" style="left:6px;top:3.3px;font-size:7.2px;color:#444448;transform:scaleX(0.87);transform-origin:0 0;white-space:nowrap">Version: 4.2.201 (r41750)</span></div>
</body></html>
